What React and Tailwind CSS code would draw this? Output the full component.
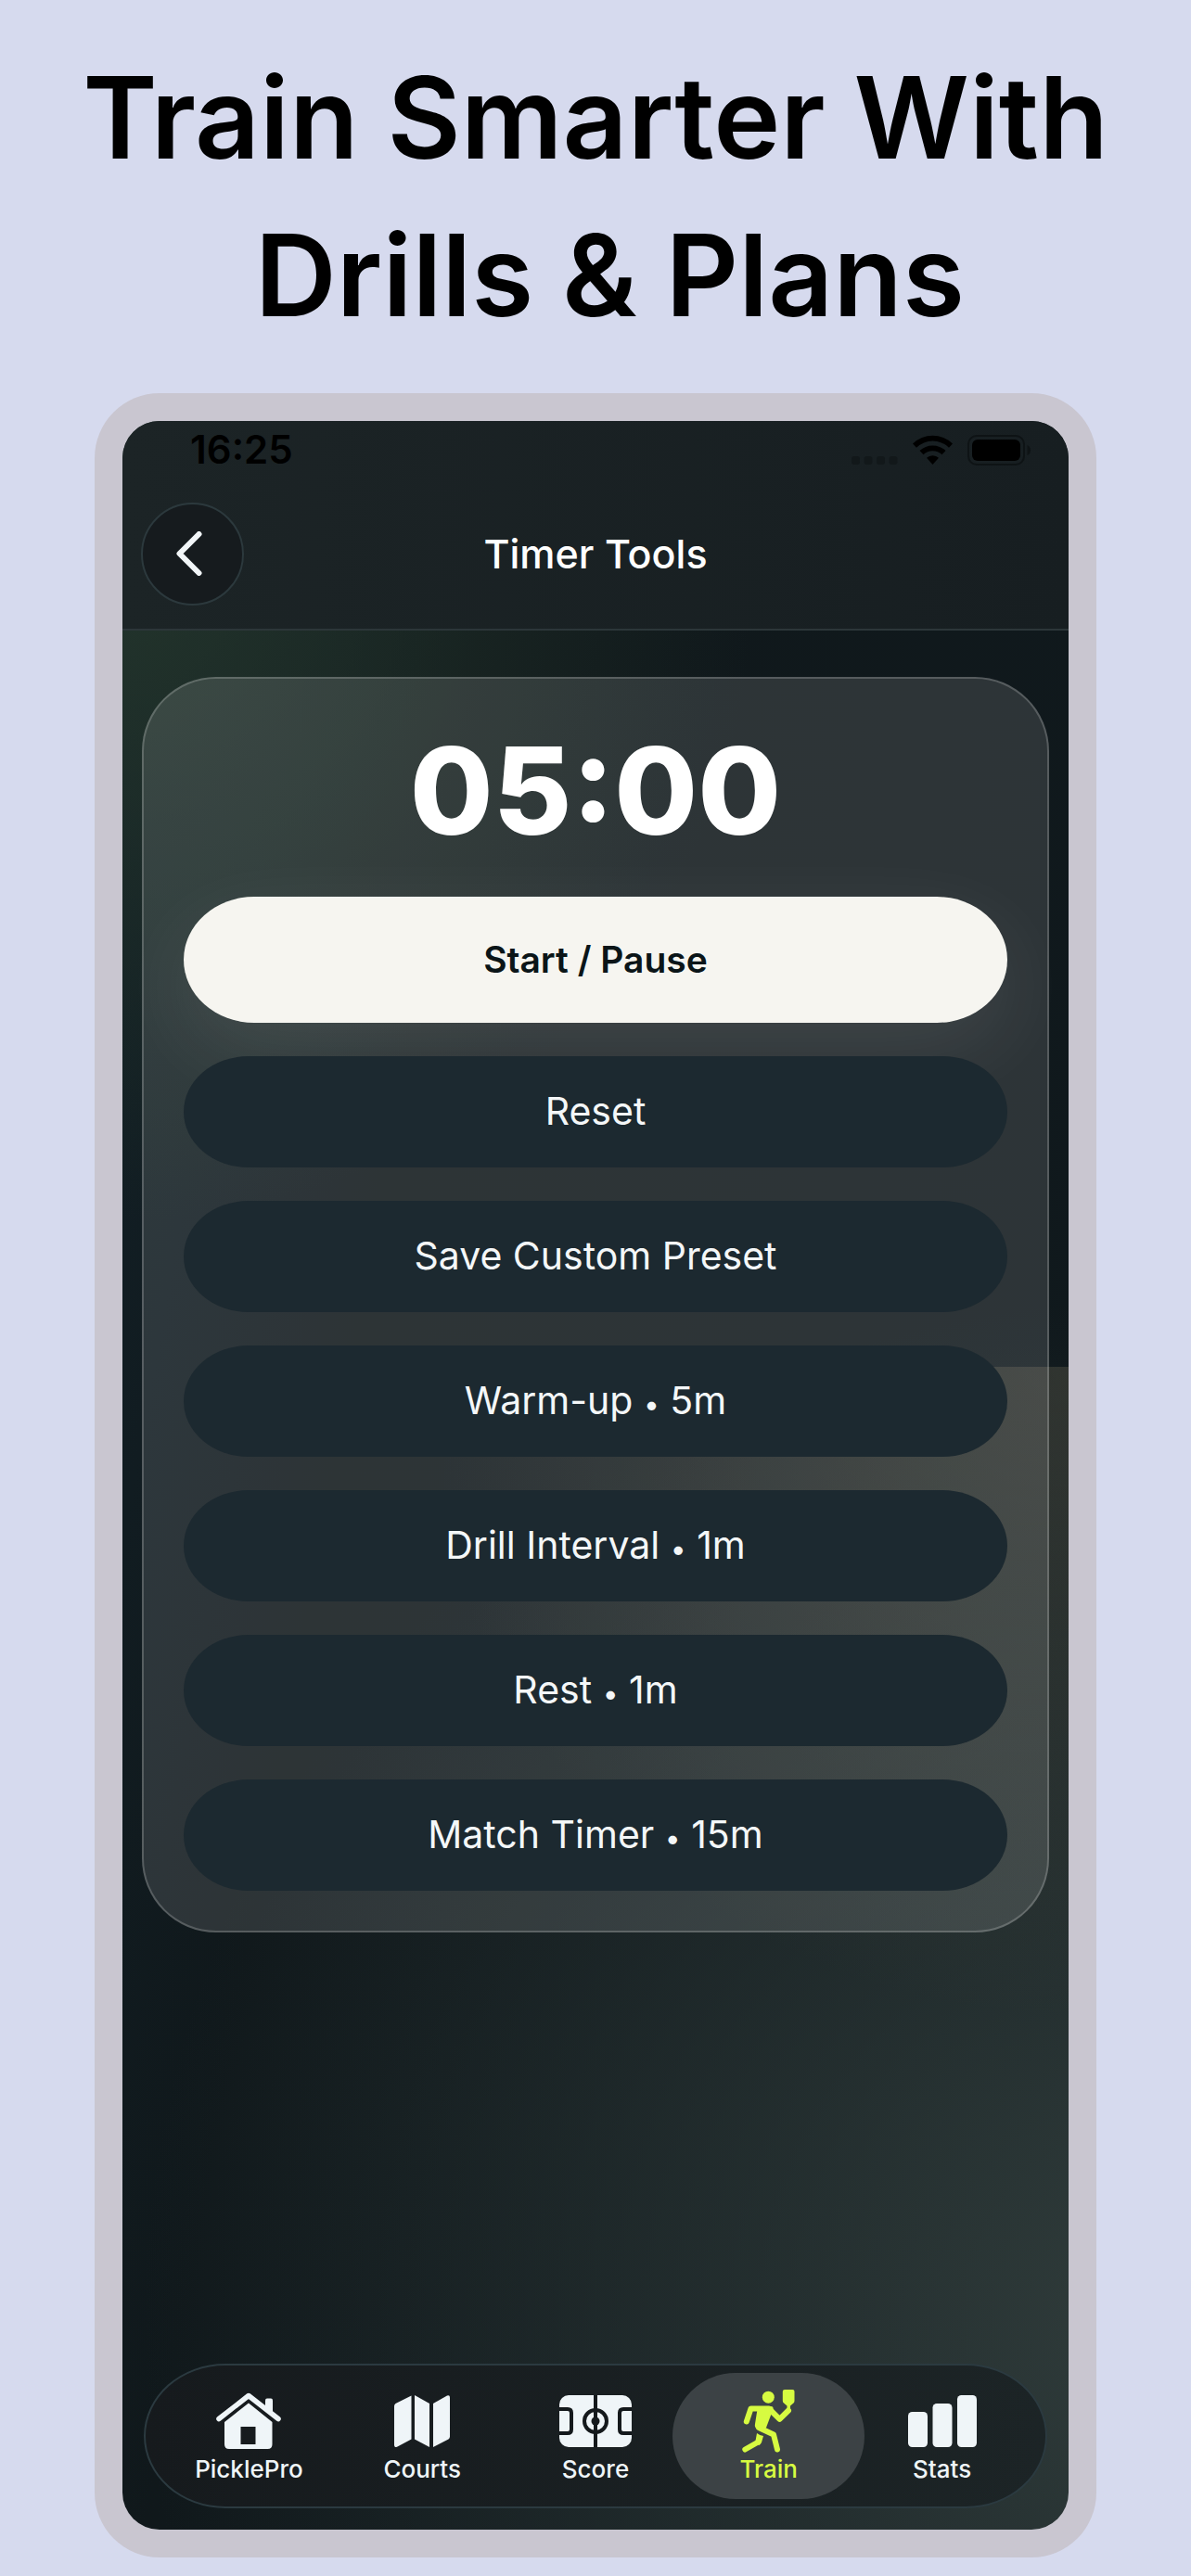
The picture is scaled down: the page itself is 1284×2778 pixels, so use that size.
import React, { useState, useEffect } from 'react';

const PRESETS = [
  { label: 'Warm-up', minutes: 5 },
  { label: 'Drill Interval', minutes: 1 },
  { label: 'Rest', minutes: 1 },
  { label: 'Match Timer', minutes: 15 },
];

const HomeIcon = () => (
  <svg width="70" height="62" viewBox="0 0 70 62" fill="currentColor">
    <path d="M3 28.5 35 3.500 67 28.500" fill="none" stroke="currentColor" strokeWidth="5.500" strokeLinecap="round" strokeLinejoin="round" />
    <path d="M53 19V8.500q0-2 2-2h4q2 0 2 2V26z" />
    <path fillRule="evenodd" d="M35 11.500 9 32v24q0 5 5 5h41.500q5 0 5-5V32zM26.500 37h16v19h-16z" />
  </svg>
);

const CourtsIcon = () => (
  <svg width="60" height="56" viewBox="0 0 60 56" fill="currentColor">
    <path d="M18.500.5v47L3 55.800q-3 1-3-2V12q0-2 1.500-3z" />
    <path d="M22 0l16 9v47l-16-8.500z" />
    <path d="M42 9 57 .6q3-1 3 2v42q0 2-1.500 3L42 56z" />
  </svg>
);

const ScoreIcon = () => (
  <svg width="78" height="56" viewBox="0 0 78 56">
    <rect width="78" height="56" rx="10" fill="currentColor" />
    <g fill="none" stroke="#14191c" strokeWidth="4">
      <path d="M39 0v56" />
      <circle cx="39" cy="28" r="12" />
      <path d="M0 15h9q4 0 4 4v18q0 4-4 4H0M78 15h-9q-4 0-4 4v18q0 4 4 4h9" />
    </g>
    <circle cx="39" cy="28" r="4.500" fill="#14191c" />
  </svg>
);

const TrainIcon = () => (
  <svg width="57" height="68" viewBox="0 0 57 68" fill="currentColor">
    <circle cx="28.300" cy="8.200" r="6.500" />
    <path d="M46 0h8.500q2 0 2 2v10q0 1.500-1 2.500L52 17.500V22h-3.500v-4.500L45 14.500q-1.200-1-1.200-2.500V2q0-2 2.200-2z" />
    <path d="M17 18h14q3 0 2.500 3L26 41q-4 4-9 2-4-2-3-6z" />
    <g fill="none" stroke="currentColor" strokeWidth="6" strokeLinecap="round" strokeLinejoin="round">
      <path d="M4.800 34.500 9.500 20.500H29l11.500 11.300L50 22.500" />
      <path d="M18 41l16 7.500 4 16" />
      <path d="M3.300 64.500 16.500 57" />
    </g>
    <path d="M16 47q3 2.500 7 3l-2 7q-.8 2-3 3.200l-3.500-5z" />
  </svg>
);

const StatsIcon = () => (
  <svg width="74" height="56" viewBox="0 0 74 56" fill="currentColor">
    <rect x="0" y="18" width="21" height="38" rx="4.500" />
    <rect x="26.500" y="9" width="21" height="47" rx="4.500" />
    <rect x="53" y="0" width="21" height="56" rx="4.500" />
  </svg>
);

const TABS = [
  { name: 'PicklePro', Icon: HomeIcon },
  { name: 'Courts', Icon: CourtsIcon },
  { name: 'Score', Icon: ScoreIcon },
  { name: 'Train', Icon: TrainIcon },
  { name: 'Stats', Icon: StatsIcon },
];

function StatusBar() {
  return (
    <div className="flex h-[62px] items-center justify-between pl-[73px] pr-[40px] text-black">
      <span className="text-[42px] leading-none font-semibold">16:25</span>
      <div className="flex items-center gap-4">
        <svg width="50" height="32" viewBox="0 0 50 32" fill="#12181a">
          <rect x="0" y="23" width="9" height="9" rx="3" />
          <rect x="13.500" y="23" width="9" height="9" rx="3" />
          <rect x="27" y="23" width="9" height="9" rx="3" />
          <rect x="40.500" y="23" width="9" height="9" rx="3" />
        </svg>
        <svg width="43" height="32" viewBox="0 0 43 32" fill="currentColor">
          <path d="M0 9.500a31 31 0 0 1 43 0l-4 4.200a25 25 0 0 0-35 0z" />
          <path d="M7.500 17a20.500 20.500 0 0 1 28 0l-4 4.200a14.500 14.500 0 0 0-20 0z" />
          <path d="M15 24.700a9.500 9.500 0 0 1 13 0L21.500 32z" />
        </svg>
        <svg width="69" height="33" viewBox="0 0 69 33">
          <rect x="1" y="1" width="60" height="31" rx="9" fill="none" stroke="#0e1315" strokeWidth="2" />
          <rect x="5" y="5" width="52" height="23" rx="6" />
          <path d="M64.500 11q3.500 1.500 3.500 5.500t-3.500 5.500z" fill="#0e1315" />
        </svg>
      </div>
    </div>
  );
}

export default function App() {
  const [seconds, setSeconds] = useState(300);
  const [duration, setDuration] = useState(300);
  const [running, setRunning] = useState(false);
  const [tab, setTab] = useState('Train');

  useEffect(() => {
    if (!running) return;
    const id = setInterval(() => setSeconds((s) => Math.max(0, s - 1)), 1000);
    return () => clearInterval(id);
  }, [running]);

  const pickPreset = (minutes) => {
    setRunning(false);
    setDuration(minutes * 60);
    setSeconds(minutes * 60);
  };

  const handleReset = () => {
    setRunning(false);
    setSeconds(duration);
  };

  const mm = String(Math.floor(seconds / 60)).padStart(2, '0');
  const ss = String(seconds % 60).padStart(2, '0');

  const darkButton = 'h-[120px] w-full rounded-[70px/60px] bg-[#1c2930] text-[41px] text-[#f4f7f8]';

  return (
    <div className="flex min-h-screen flex-col bg-[#d6daee] px-[102px] pt-[42px] pb-5 font-['Inter','Liberation_Sans',sans-serif]">
      <h1 className="-mx-20 mb-[42px] text-center text-[122px] leading-[170px] font-semibold text-black">
        Train Smarter With
        <br />
        &nbsp;Drills &amp; Plans
      </h1>

      {/* Phone frame */}
      <div className="flex flex-1 flex-col rounded-[70px] bg-[#c9c6d0] p-[30px]">
        <div className="flex flex-1 flex-col overflow-hidden rounded-[40px] bg-[radial-gradient(circle_at_100%_0%,#6d675455,#6d675400_700px),radial-gradient(circle_at_0%_8%,#26382ccc,#26382c00_680px),radial-gradient(circle_at_110%_90%,#303c3b,#303c3b00_1100px),linear-gradient(100deg,#122027,#10181b_30%,#10191d)] bg-[size:66%_1000px,100%_100%,100%_100%,100%_100%] bg-[position:100%_1020px,0_0,0_0,0_0] bg-no-repeat">
          <header className="border-b-2 border-[#2c3639] bg-linear-to-r from-[#1c2426] to-[#171e21]">
            <StatusBar />
            <div className="grid h-[162px] grid-cols-[111px_1fr_111px] items-center px-5">
              <button aria-label="Back" className="flex size-[111px] items-center justify-center rounded-full border-2 border-[#2c393d] bg-[#161b1e] text-[#f2f6f8]">
                <svg width="28" height="48" viewBox="0 0 28 48" className="mr-2" fill="none" stroke="currentColor" strokeWidth="6" strokeLinecap="round" strokeLinejoin="round">
                  <path d="M24.500 3 3.500 24l21 21" />
                </svg>
              </button>
              <h2 className="text-center text-[43px] font-medium text-white">Timer Tools</h2>
            </div>
          </header>

          <main className="flex-1 px-[21px] pt-[50px]">
            <section className="flex flex-col gap-9 rounded-[80px] border-2 border-white/20 bg-white/12 p-[43px]">
              <p className="flex h-[156px] items-center justify-center text-[130px] leading-none font-extrabold text-white">
                {mm}:{ss}
              </p>
              <button onClick={() => setRunning(!running)} className="h-[136px] w-full rounded-[76px/68px] bg-[#f6f5f0] text-[39px] font-semibold text-[#0b1518] shadow-[0_28px_90px_rgba(255,255,255,0.09)]">
                Start / Pause
              </button>
              <button onClick={handleReset} className={darkButton}>Reset</button>
              <button className={darkButton}>Save Custom Preset</button>
              {PRESETS.map((p) => (
                <button key={p.label} onClick={() => pickPreset(p.minutes)} className={darkButton}>
                  {p.label} <span className="text-[30px]">•</span> {p.minutes}m
                </button>
              ))}
            </section>
          </main>

          {/* Bottom tabs */}
          <nav className="mx-[23px] mb-[23px] flex h-[156px] rounded-[88px/78px] border-2 border-[#2b3a40] bg-linear-to-r from-[#161a1d] to-[#1c2426] px-[18px] py-2">
            {TABS.map(({ name, Icon }) => (
              <button
                key={name}
                onClick={() => setTab(name)}
                className={`-mx-2.5 flex flex-1 flex-col items-center rounded-full text-[26px] leading-8 font-medium ${tab === name ? 'bg-[#3c4245] text-[#d7fb41]' : 'text-[#eff5f8]'}`}
              >
                <span className="flex h-20 items-end justify-center">
                  <span className="flex h-[56px] items-center justify-center"><Icon /></span>
                </span>
                <span className="mt-2">{name}</span>
              </button>
            ))}
          </nav>
        </div>
      </div>
    </div>
  );
}
